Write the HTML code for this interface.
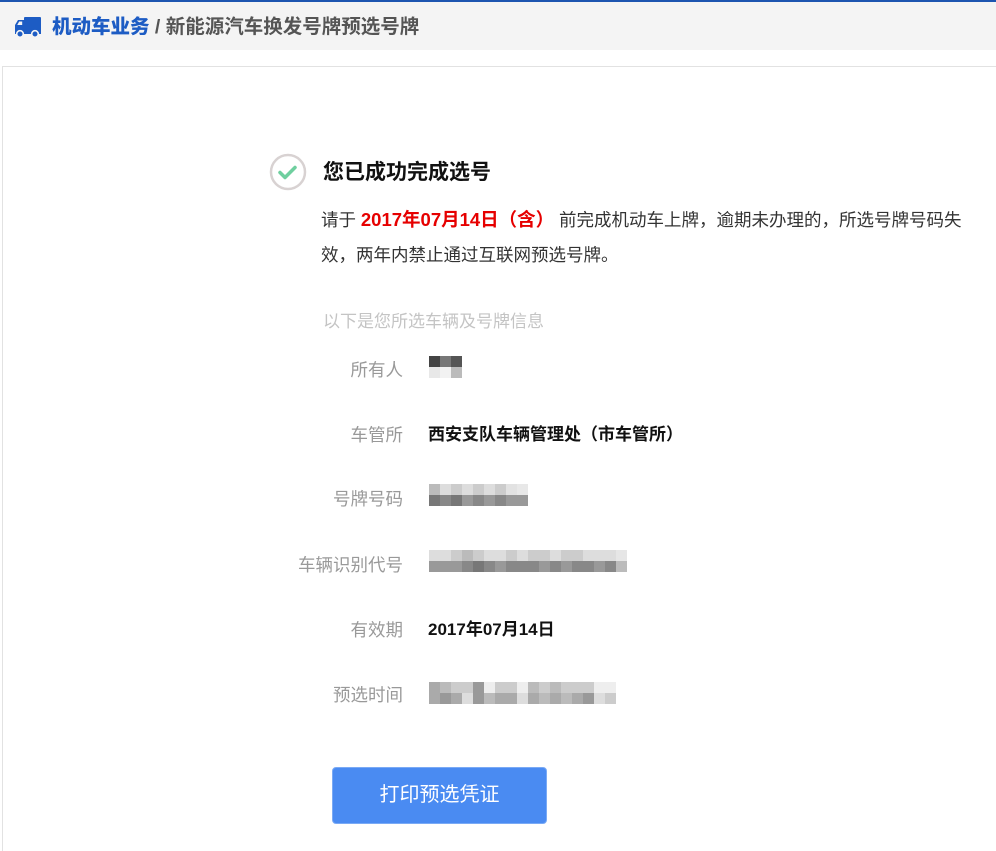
<!DOCTYPE html>
<html><head><meta charset="utf-8">
<style>
*{margin:0;padding:0;box-sizing:border-box}
html{width:996px;height:851px;overflow:hidden}
body{width:996px;height:851px;background:#fff;font-family:"Liberation Sans","Noto Sans CJK SC",sans-serif;position:relative;overflow:hidden}
.topline{position:absolute;left:0;top:0;width:996px;height:2px;background:#1d55b0}
.hdr{position:absolute;left:0;top:2px;width:996px;height:48px;background:#f4f4f4}
.hdr .t{position:absolute;left:52px;top:13px;font-size:19.5px;font-weight:bold;color:#555;white-space:nowrap;line-height:24px}
.hdr .t b{color:#1d5cc4}
.panel{position:absolute;left:2px;top:66px;width:1000px;height:800px;border:1px solid #e2e2e2}
.abs{position:absolute;white-space:nowrap}
.lbl{position:absolute;right:593px;font-size:17.5px;color:#999;white-space:nowrap;line-height:20px}
.val{position:absolute;left:428px;font-size:17px;font-weight:bold;color:#111;white-space:nowrap;line-height:20px}
.pix{position:absolute;left:429px;display:grid;grid-auto-flow:column;grid-template-rows:11px 11px;grid-auto-columns:11px}
.pix i{display:block;width:11px;height:11px}
.btn{position:absolute;left:332px;top:767px;width:215px;height:57px;background:#4a8bf2;border-radius:4px;color:#fff;font-size:20px;text-align:center;line-height:55px;border:1px solid #7aaaf5}
</style></head><body>
<div class="topline"></div>
<div class="hdr">
<svg style="position:absolute;left:15px;top:14px" width="27" height="22" viewBox="0 0 27 22"><rect x="9" y="1" width="17" height="15" rx="1" fill="#1d5cc4"/><path d="M0 16V9l3-5h6v12z" fill="#1d5cc4"/><path d="M2.2 9l2-3.5h3V9z" fill="#f4f4f4"/><rect x="0" y="14" width="26" height="4" fill="#1d5cc4"/><circle cx="5" cy="18" r="3.3" fill="#1d5cc4" stroke="#f4f4f4" stroke-width="1.6"/><circle cx="20" cy="18" r="3.3" fill="#1d5cc4" stroke="#f4f4f4" stroke-width="1.6"/></svg>
<div class="t"><b>机动车业务</b> / 新能源汽车换发号牌预选号牌</div>
</div>
<div class="panel"></div>
<svg class="abs" style="left:269px;top:153px" width="38" height="38" viewBox="0 0 38 38"><circle cx="19" cy="19" r="17" fill="#fff" stroke="#d8d2d2" stroke-width="2.5"/><path d="M11 19.5l5 5 10-10" fill="none" stroke="#6fcf9f" stroke-width="3.5" stroke-linecap="round" stroke-linejoin="round"/></svg>
<div class="abs" style="left:323px;top:159px;font-size:21px;font-weight:bold;color:#111;line-height:28px">您已成功完成选号</div>
<div class="abs" style="left:321px;top:202px;font-size:17.5px;color:#333;line-height:35px">请于 <b style="color:#e60000;font-size:18.5px">2017年07月14日（含）</b> 前完成机动车上牌，逾期未办理的，所选号牌号码失<br>效，两年内禁止通过互联网预选号牌。</div>
<div class="abs" style="left:323px;top:311px;font-size:17px;color:#c4c4c4;line-height:22px">以下是您所选车辆及号牌信息</div>

<div class="lbl" style="top:360px">所有人</div>
<div class="pix" style="top:356px"><i style="background:#444"></i><i style="background:#e8e8e8"></i><i style="background:#777"></i><i style="background:#f2f2f2"></i><i style="background:#555"></i><i style="background:#bbb"></i></div>

<div class="lbl" style="top:425px">车管所</div>
<div class="val" style="top:425px">西安支队车辆管理处（市车管所）</div>

<div class="lbl" style="top:489px">号牌号码</div>
<div class="pix" style="top:484px"><i style="background:#bbb"></i><i style="background:#777"></i><i style="background:#ddd"></i><i style="background:#888"></i><i style="background:#ccc"></i><i style="background:#777"></i><i style="background:#ddd"></i><i style="background:#999"></i><i style="background:#ccc"></i><i style="background:#888"></i><i style="background:#ddd"></i><i style="background:#999"></i><i style="background:#ccc"></i><i style="background:#888"></i><i style="background:#e2e2e2"></i><i style="background:#999"></i><i style="background:#e8e8e8"></i><i style="background:#999"></i></div>

<div class="lbl" style="top:555px">车辆识别代号</div>
<div class="pix" style="top:550px"><i style="background:#ddd"></i><i style="background:#999"></i><i style="background:#ddd"></i><i style="background:#999"></i><i style="background:#ccc"></i><i style="background:#999"></i><i style="background:#bbb"></i><i style="background:#888"></i><i style="background:#ccc"></i><i style="background:#777"></i><i style="background:#ddd"></i><i style="background:#888"></i><i style="background:#ddd"></i><i style="background:#999"></i><i style="background:#ccc"></i><i style="background:#888"></i><i style="background:#ddd"></i><i style="background:#888"></i><i style="background:#ccc"></i><i style="background:#888"></i><i style="background:#ccc"></i><i style="background:#999"></i><i style="background:#ddd"></i><i style="background:#888"></i><i style="background:#ccc"></i><i style="background:#999"></i><i style="background:#ccc"></i><i style="background:#888"></i><i style="background:#ddd"></i><i style="background:#888"></i><i style="background:#ddd"></i><i style="background:#999"></i><i style="background:#ddd"></i><i style="background:#888"></i><i style="background:#e6e6e6"></i><i style="background:#bbb"></i></div>

<div class="lbl" style="top:620px">有效期</div>
<div class="val" style="top:620px">2017年07月14日</div>

<div class="lbl" style="top:685px">预选时间</div>
<div class="pix" style="top:682px"><i style="background:#aaa"></i><i style="background:#aaa"></i><i style="background:#bbb"></i><i style="background:#999"></i><i style="background:#ccc"></i><i style="background:#aaa"></i><i style="background:#ccc"></i><i style="background:#ddd"></i><i style="background:#999"></i><i style="background:#999"></i><i style="background:#eee"></i><i style="background:#bbb"></i><i style="background:#ccc"></i><i style="background:#aaa"></i><i style="background:#ccc"></i><i style="background:#aaa"></i><i style="background:#eee"></i><i style="background:#ddd"></i><i style="background:#bbb"></i><i style="background:#aaa"></i><i style="background:#ccc"></i><i style="background:#bbb"></i><i style="background:#bbb"></i><i style="background:#aaa"></i><i style="background:#ccc"></i><i style="background:#bbb"></i><i style="background:#ccc"></i><i style="background:#aaa"></i><i style="background:#ccc"></i><i style="background:#999"></i><i style="background:#eee"></i><i style="background:#ddd"></i><i style="background:#eee"></i><i style="background:#ccc"></i></div>

<div class="btn">打印预选凭证</div>
</body></html>
